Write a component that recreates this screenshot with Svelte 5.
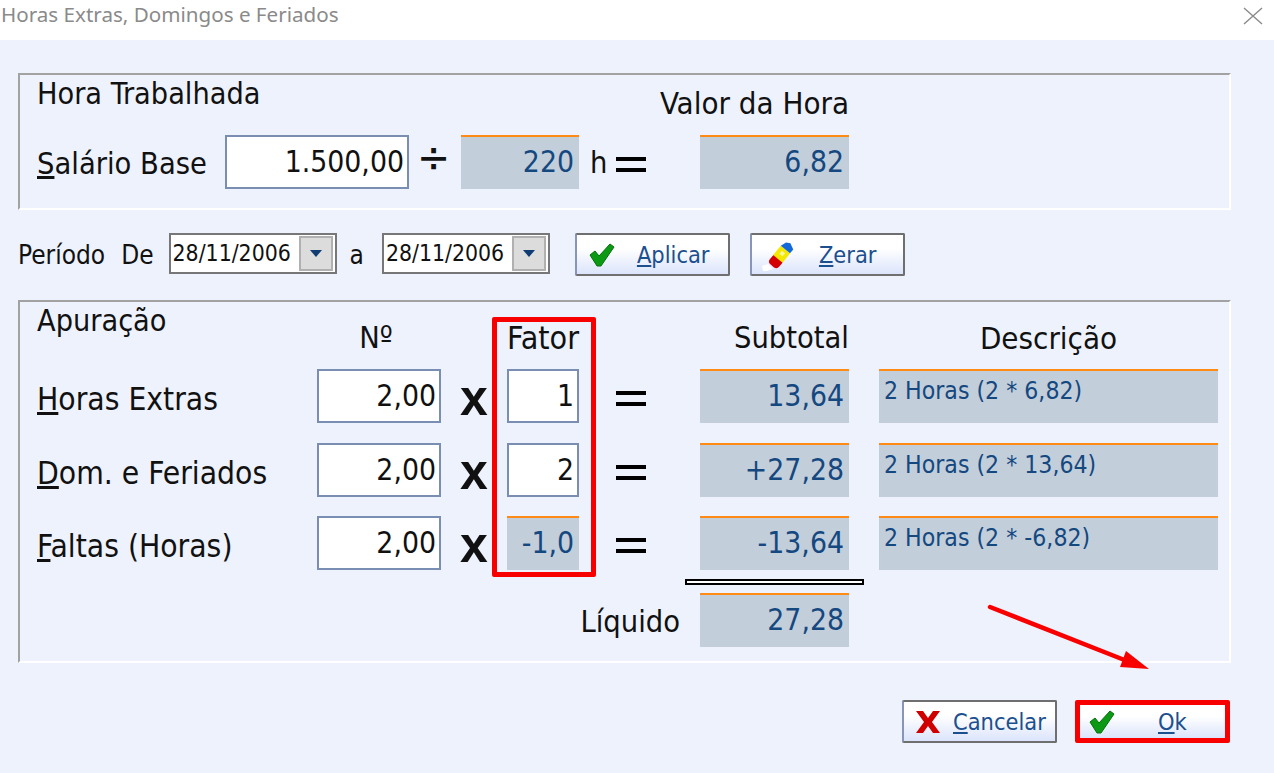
<script>
	const rows = [
		{ key: 'H', rest: 'oras Extras', n: '2,00', fator: '1', sub: '13,64', desc: '2 Horas (2 * 6,82)' },
		{ key: 'D', rest: 'om. e Feriados', n: '2,00', fator: '2', sub: '+27,28', desc: '2 Horas (2 * 13,64)' },
		{ key: 'F', rest: 'altas (Horas)', n: '2,00', fator: '-1,0', ro: true, sub: '-13,64', desc: '2 Horas (2 * -6,82)' }
	];
	const dates = ['28/11/2006', '28/11/2006'];
</script>

{#snippet check()}
	<svg class="ico" viewBox="0 0 26 24" width="26" height="24">
		<path d="M1 12 L6 8 L10 13 L21 1 L25 4 L12 23 L8 23 Z" fill="#0c9a14" stroke="#06700c" stroke-width="1" />
	</svg>
{/snippet}

<div class="window">
	<header class="titlebar">
		<span class="title">Horas Extras, Domingos e Feriados</span>
		<svg class="close" viewBox="0 0 20 18" width="20" height="18">
			<path d="M1 1 L19 17 M19 1 L1 17" stroke="#8a8a8a" stroke-width="1.4" fill="none" />
		</svg>
	</header>

	<main class="dialog">
		<section class="panel hora">
			<div class="caption">Hora Trabalhada</div>
			<div class="valor-head">Valor da Hora</div>
			<div class="lbl"><u>S</u>alário Base</div>
			<div class="input">1.500,00</div>
			<div class="div-sign">÷</div>
			<div class="ro">220</div>
			<div class="h-eq"><span class="h">h</span><i class="eq"></i></div>
			<div class="ro">6,82</div>
		</section>

		<div class="periodo">
			<span class="per-lbl">Período</span>
			<span class="per-lbl de">De</span>
			<div class="date">
				<span>{dates[0]}</span>
				<b class="drop"><i></i></b>
			</div>
			<span class="per-lbl a">a</span>
			<div class="date">
				<span>{dates[1]}</span>
				<b class="drop"><i></i></b>
			</div>
			<button class="btn aplicar">
				{@render check()}
				<span><u>A</u>plicar</span>
			</button>
			<button class="btn zerar">
				<svg class="ico" viewBox="0 0 34 32" width="34" height="32">
					<path d="M0 27 L6 25 L11 30 L5 32 L1 32 Z" fill="#fff" />
					<g transform="rotate(39 19 16)">
						<rect x="13" y="18" width="12" height="12" rx="4" fill="#d40000" />
						<rect x="13" y="9" width="12" height="12" fill="#f4e800" />
						<rect x="17" y="12" width="4" height="4" fill="#f8f6a0" />
						<path d="M13 9 L15 3 L19 1 L25 4 L25 9 Z" fill="#1469d8" />
					</g>
				</svg>
				<span><u>Z</u>erar</span>
			</button>
		</div>

		<section class="panel apuracao">
			<div class="caption apu">Apuração</div>
			<div class="head center n-col">Nº</div>
			<div class="head center fat-col">Fator</div>
			<div class="head right sub-col">Subtotal</div>
			<div class="head center desc-col">Descrição</div>

			{#each rows as r}
				<div class="lbl row-lbl"><u>{r.key}</u>{r.rest}</div>
				<div class="input">{r.n}</div>
				<div class="times">x</div>
				<div class={r.ro ? 'ro' : 'input'}>{r.fator}</div>
				<div class="eq-cell"><i class="eq"></i></div>
				<div class="ro">{r.sub}</div>
				<div class="ro desc">{r.desc}</div>
			{/each}

			<div class="dbl-wrap"><div class="dbl"></div></div>
			<div class="lbl liquido">Líquido</div>
			<div class="ro liq-val">27,28</div>
		</section>

		<footer class="actions">
			<button class="btn cancelar">
				<svg class="ico" viewBox="0 0 26 24" width="26" height="24">
					<path d="M1 1 H8 L13 8 L18 1 H25 L17 12 L25 23 H18 L13 16 L8 23 H1 L9 12 Z" fill="#d00000" />
				</svg>
				<span><u>C</u>ancelar</span>
			</button>
			<button class="btn ok">
				{@render check()}
				<span><u>O</u>k</span>
			</button>
		</footer>
	</main>

	<!-- marcações vermelhas sobre o print -->
	<div class="mark-fator"></div>
	<svg class="arrow" viewBox="0 0 170 70" width="170" height="70">
		<path d="M3 3 L140 57" stroke="#f80000" stroke-width="4.5" stroke-linecap="round" fill="none" />
		<path d="M139 47 L162 65 L133 63 Z" fill="#f80000" />
	</svg>
</div>

<style>
	:global(body) { margin: 0; background: #eef2fd; }
	.window {
		position: relative;
		width: 1274px;
		height: 773px;
		overflow: hidden;
		background: #eef2fd;
		font-family: "DejaVu Sans Condensed", "DejaVu Sans", sans-serif;
		color: #111;
	}
	.titlebar {
		height: 40px;
		background: #fff;
		display: flex;
		align-items: center;
		justify-content: space-between;
		padding: 0 11px 10px 1px;
		box-sizing: border-box;
	}
	.title {
		font-family: "Noto Sans", sans-serif;
		font-size: 20.6px;
		color: #8a8a8a;
		margin-top: -2px;
	}
	.close { margin-top: 2px; }
	.dialog { padding: 33px 43px 0 18px; }
	.panel {
		box-sizing: border-box;
		border: 2px solid #fff;
		border-top-color: #a2a2a2;
		border-left-color: #a2a2a2;
		padding-left: 17px;
	}
	.hora {
		height: 137px;
		display: grid;
		grid-template-columns: 188px 184px 52px 118px 121px 149px;
		grid-template-rows: 60px 54px;
	}
	.caption { font-size: 30.3px; line-height: 38px; grid-column: 1 / 3; }
	.valor-head {
		grid-column: 4 / 7;
		justify-self: end;
		align-self: end;
		font-size: 31px;
		line-height: 38px;
		margin-bottom: 13px;
	}
	.lbl { font-size: 30.5px; line-height: 57px; }
	.input, .ro {
		box-sizing: border-box;
		height: 54px;
		text-align: right;
		font-size: 29.8px;
		line-height: 49px;
		padding-right: 4px;
	}
	.input {
		background: #fff;
		border: 2px solid #7a8db2;
		padding-right: 3px;
	}
	.ro {
		background: #c3cedb;
		border-top: 2px solid #ff8a14;
		color: #14487f;
		padding-right: 5px;
	}
	.div-sign { font-size: 44px; line-height: 44px; padding-left: 8px; }
	.h-eq {
		display: flex;
		align-items: center;
		gap: 9px;
		padding-left: 11px;
	}
	.h { font-size: 30.5px; }
	.eq {
		display: block;
		width: 30px;
		height: 7px;
		border-top: 4px solid #000;
		border-bottom: 4px solid #000;
		margin-top: 4px;
	}
	.periodo {
		display: flex;
		align-items: flex-start;
		height: 43px;
		margin-top: 23px;
	}
	.per-lbl { font-size: 26px; line-height: 44px; }
	.de { margin-left: 16px; margin-right: 15px; }
	.a { margin: 0 18px 0 13px; }
	.date {
		box-sizing: border-box;
		width: 168px;
		height: 41px;
		background: #fff;
		border: 2px solid #777;
		display: flex;
		justify-content: space-between;
		font-size: 22.8px;
		line-height: 37px;
		padding-left: 2px;
	}
	.drop {
		box-sizing: border-box;
		width: 34px;
		height: 35px;
		margin: 1px 2px 0 0;
		background: #dcdcdc;
		border: 2px solid #b0b0b0;
		display: flex;
		align-items: center;
		justify-content: center;
	}
	.drop i {
		width: 0;
		height: 0;
		border-left: 6px solid transparent;
		border-right: 6px solid transparent;
		border-top: 7px solid #0f3d73;
	}
	.btn {
		box-sizing: border-box;
		width: 155px;
		height: 43px;
		padding: 0 0 0 12px;
		display: flex;
		align-items: center;
		background: linear-gradient(#fff 35%, #dbe4fb);
		border: 2px solid #6f6f6f;
		border-left-color: #8796b8;
		border-radius: 2px;
		font-family: inherit;
		font-size: 23.4px;
		color: #1c4f8e;
		cursor: pointer;
	}
	.aplicar { margin-left: 25px; }
	.aplicar span { margin-left: 22px; }
	.zerar { margin-left: 20px; padding-left: 10px; }
	.zerar span { margin-left: 23px; }
	.apuracao {
		height: 363px;
		margin-top: 24px;
		display: grid;
		grid-template-columns: 280px 124px 66px 72px 121px 149px 30px 339px;
		grid-template-rows: 67px 54px 20px 54px 19px 54px 23px 54px;
	}
	.apu { grid-column: 1; grid-row: 1; line-height: 38px; }
	.head { font-size: 30.5px; line-height: 38px; grid-row: 1; margin-top: 17px; }
	.center { text-align: center; }
	.right { text-align: right; }
	.n-col { grid-column: 2; padding-right: 6px; }
	.fat-col { grid-column: 4; font-size: 32px; }
	.sub-col { grid-column: 6; }
	.desc-col { grid-column: 8; font-size: 31px; }
	.row-lbl { grid-column: 1; line-height: 60px; font-size: 31.5px; }
	.apuracao > :nth-child(n + 6):nth-child(-n + 12) { grid-row: 2; }
	.apuracao > :nth-child(n + 13):nth-child(-n + 19) { grid-row: 4; }
	.apuracao > :nth-child(n + 20):nth-child(-n + 26) { grid-row: 6; }
	.times {
		font-family: "Liberation Sans", sans-serif;
		font-weight: bold;
		font-size: 50px;
		line-height: 58px;
		padding-left: 19px;
	}
	.eq-cell { display: flex; padding: 18px 0 0 37px; }
	.ro.desc {
		grid-column: 8;
		text-align: left;
		font-size: 24.6px;
		line-height: 40px;
		padding-left: 5px;
	}
	.dbl-wrap { grid-column: 6; grid-row: 7; padding-top: 9px; }
	.dbl {
		box-sizing: border-box;
		height: 6px;
		margin: 0 -15px;
		background: #fff;
		border: 2px solid #000;
	}
	.lbl.liquido { grid-column: 5; grid-row: 8; text-align: right; padding-right: 20px; line-height: 58px; }
	.liq-val { grid-column: 6; grid-row: 8; }
	.actions {
		display: flex;
		justify-content: flex-end;
		gap: 18px;
		margin-top: 37px;
		margin-right: 1px;
	}
	.cancelar { padding-left: 11px; }
	.cancelar span { margin-left: 12px; }
	.ok { padding-left: 9px; border: 5px solid #f80000; border-radius: 2px; }
	.ok span { margin-left: 43px; }
	.ico { flex: none; }
	.mark-fator {
		position: absolute;
		left: 492px;
		top: 317px;
		width: 104px;
		height: 260px;
		box-sizing: border-box;
		border: 5px solid #f80000;
		border-radius: 2px;
	}
	.arrow { position: absolute; left: 987px; top: 604px; }
</style>
